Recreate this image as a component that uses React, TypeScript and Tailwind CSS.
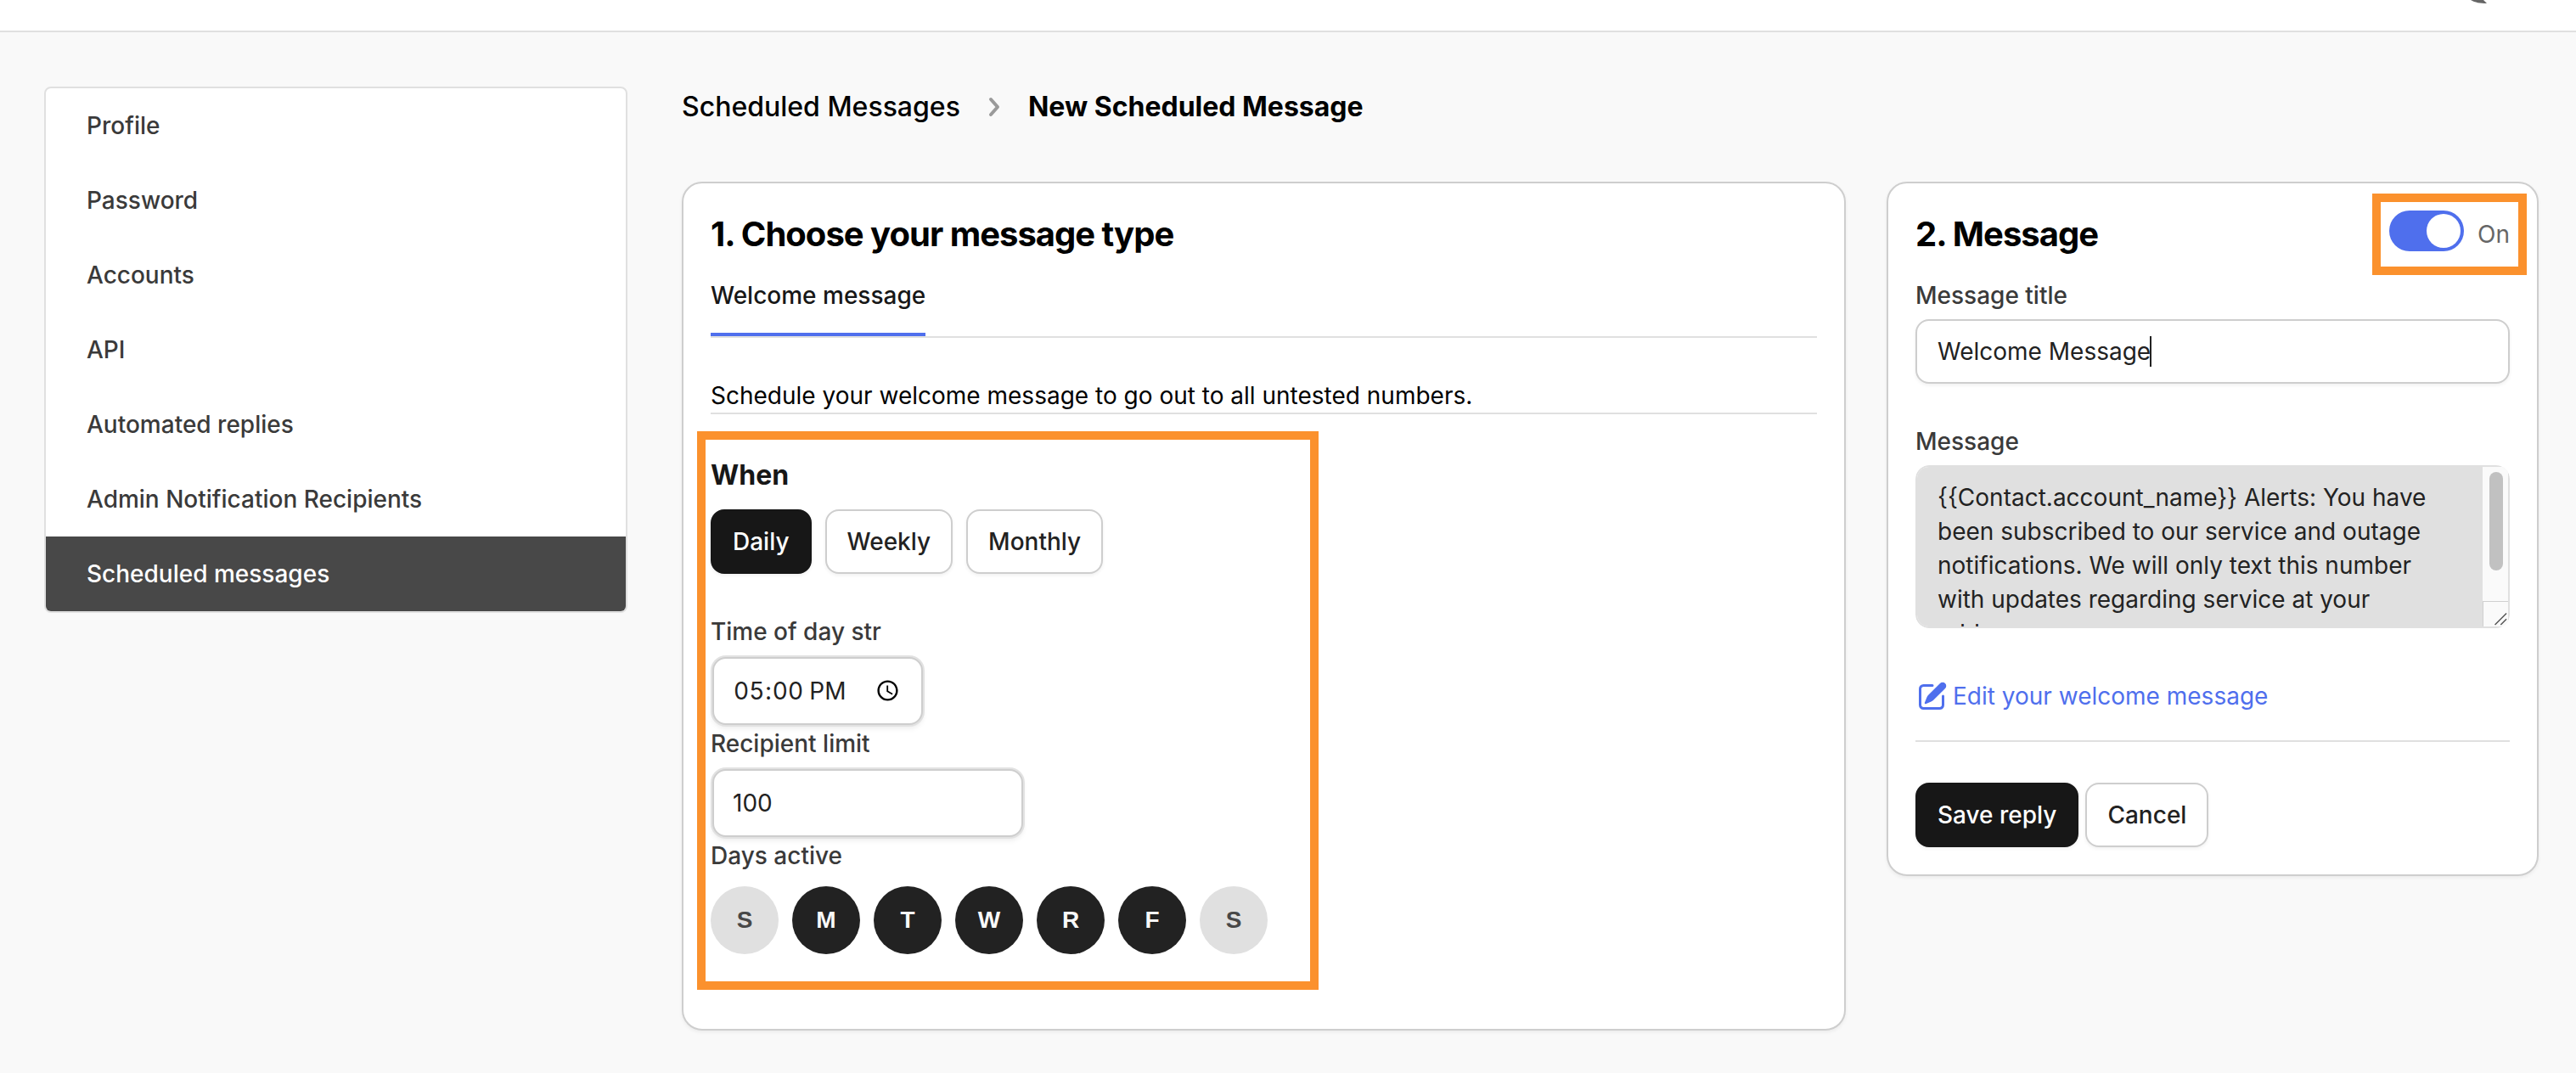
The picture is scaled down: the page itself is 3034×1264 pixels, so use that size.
import clsx from "clsx";
import { HiMiniPencilSquare } from "react-icons/hi2";

const navItems = [
  "Profile",
  "Password",
  "Accounts",
  "API",
  "Automated replies",
  "Admin Notification Recipients",
  "Scheduled messages",
];

const frequencies = ["Daily", "Weekly", "Monthly"];

const days = [
  { name: "Sunday", letter: "S", active: false },
  { name: "Monday", letter: "M", active: true },
  { name: "Tuesday", letter: "T", active: true },
  { name: "Wednesday", letter: "W", active: true },
  { name: "Thursday", letter: "R", active: true },
  { name: "Friday", letter: "F", active: true },
  { name: "Saturday", letter: "S", active: false },
];

const welcomeText =
  "{{Contact.account_name}} Alerts: You have been subscribed to our service and outage notifications. We will only text this number with updates regarding service at your address\n\nReply STOP to opt out at any time.";

const cardClass =
  "rounded-3xl border-2 border-[#cecece] bg-white p-8 shadow-[0_2px_4px_rgba(0,0,0,0.06)]";
const labelClass = "block text-[28px] leading-10 font-medium text-[#3a3a3a]";
const ringInputClass =
  "m-0.5 h-20 rounded-2xl border-2 border-[#cecece] bg-white px-[22px] text-[28px] text-[#222] shadow-[0_0_0_2px_#e2e2e2,0_4px_6px_rgba(0,0,0,0.08)] outline-none";

function Button({ children, primary = false }: { children: string; primary?: boolean }) {
  return (
    <button
      type="button"
      className={clsx(
        "h-[76px] rounded-2xl border-2 px-6 text-[28px] leading-10 font-medium shadow-[0_2px_4px_rgba(0,0,0,0.06)]",
        primary ? "border-[#171717] bg-[#171717] text-white" : "border-[#cecece] bg-white text-[#222]"
      )}
    >
      {children}
    </button>
  );
}

function Sidebar() {
  return (
    <nav className="w-[687px] shrink-0 self-start overflow-hidden rounded-lg border-2 border-[#e0e0e0] bg-white">
      {navItems.map((item) => (
        <a
          key={item}
          href="#"
          className={clsx(
            "block px-12 py-6 text-[28px] leading-10 font-medium",
            item === "Scheduled messages" ? "bg-[#484848] text-white" : "text-[#3a3a3a]"
          )}
        >
          {item}
        </a>
      ))}
    </nav>
  );
}

function Breadcrumb() {
  return (
    <div className="flex items-center gap-8 text-[32px] leading-12 text-black">
      <a href="#" className="font-medium">
        Scheduled Messages
      </a>
      <svg className="h-6 w-4" viewBox="0 0 16 24" fill="none" stroke="#9a9a9a" strokeWidth="4">
        <path d="M4 3l8 9-8 9" strokeLinecap="round" strokeLinejoin="round" />
      </svg>
      <span className="font-bold">New Scheduled Message</span>
    </div>
  );
}

function MessageType() {
  return (
    <section className={cardClass}>
      <h2 className="text-[40px] leading-14 font-bold tracking-tight text-black">1. Choose your message type</h2>

      <div className="mt-6 flex border-b-2 border-[#e0e0e0]">
        <a href="#" className="border-b-4 border-[#4f6fed] pb-6 text-[28px] leading-10 font-medium text-[#171717]">
          Welcome message
        </a>
      </div>

      <p className="mt-12 border-b-2 border-[#e0e0e0] text-[28px] leading-10 text-black">
        Schedule your welcome message to go out to all untested numbers.
      </p>

      <div className="relative mt-12 mb-14 flex w-fit flex-col items-start">
        <h3 className="text-[32px] leading-12 font-bold text-[#171717]">When</h3>
        <div className="mt-4 flex gap-4">
          {frequencies.map((f) => (
            <Button key={f} primary={f === "Daily"}>
              {f}
            </Button>
          ))}
        </div>

        <label htmlFor="time" className={clsx(labelClass, "mt-12 mb-2")}>
          Time of day str
        </label>
        <input
          id="time"
          type="time"
          defaultValue="17:00"
          className={clsx(ringInputClass, "w-[248px] tabular-nums")}
        />

        <label htmlFor="limit" className={clsx(labelClass, "mb-2")}>
          Recipient limit
        </label>
        <input
          id="limit"
          type="text"
          inputMode="numeric"
          defaultValue="100"
          className={clsx(ringInputClass, "w-[366px]")}
        />

        <p className={labelClass}>Days active</p>
        <div className="mt-4 flex gap-4">
          {days.map((day) => (
            <button
              key={day.name}
              type="button"
              aria-label={day.name}
              aria-pressed={day.active}
              className={clsx(
                "size-20 rounded-full font-['Liberation_Sans',Arial,sans-serif] text-[28px] font-bold",
                day.active ? "bg-[#222] text-[#f9f9f9]" : "bg-[#e0e0e0] text-[#484848]"
              )}
            >
              {day.letter}
            </button>
          ))}
        </div>

        {/* Highlight */}
        <div className="pointer-events-none absolute -top-7 -right-15 -bottom-[42px] -left-4 border-[10px] border-[#fb912d]" />
      </div>
    </section>
  );
}

function MessageForm() {
  return (
    <section className={clsx(cardClass, "self-start")}>
      <div className="flex justify-between">
        <h2 className="text-[40px] leading-14 font-bold tracking-tight text-black">2. Message</h2>
        <label className="relative flex items-start gap-4">
          <input type="checkbox" defaultChecked className="peer sr-only" />
          <span className="flex h-12 w-[88px] justify-end rounded-full bg-[#4f6fed] p-1">
            <span className="size-10 rounded-full bg-white" />
          </span>
          <span className="pt-2 text-[28px] leading-10 text-[#666]">On</span>
          {/* Highlight */}
          <span className="pointer-events-none absolute -inset-5 border-[10px] border-[#fb912d]" />
        </label>
      </div>

      <label htmlFor="title" className={clsx(labelClass, "mt-6 mb-2")}>
        Message title
      </label>
      <div className="relative">
        <input
          id="title"
          type="text"
          defaultValue="Welcome Message"
          className="block h-[76px] w-full rounded-2xl border-2 border-[#cecece] bg-white px-6 text-[28px] text-[#222] caret-transparent shadow-[0_2px_4px_rgba(0,0,0,0.06)] outline-none"
        />
        {/* Caret */}
        <span className="pointer-events-none absolute top-5 left-[276px] h-9 w-0.5 bg-[#222]" />
      </div>

      <label htmlFor="message" className={clsx(labelClass, "mt-12 mb-2")}>
        Message
      </label>
      <div className="relative overflow-hidden rounded-2xl">
        <textarea
          id="message"
          readOnly
          defaultValue={welcomeText}
          className="block h-48 w-full resize-none rounded-2xl border-2 border-[#e0e0e0] bg-[#e0e0e0] py-4 pr-14 pl-6 text-[28px] leading-10 text-[#222] outline-none [scrollbar-width:none]"
        />
        {/* Scroll track and resize grip */}
        <div className="pointer-events-none absolute top-0.5 right-0.5 bottom-0.5 flex w-[30px] flex-col justify-between bg-[#fafafa]">
          <div className="mt-1.5 ml-2 h-[116px] w-4 rounded-full bg-[#c1c1c1]" />
          <svg
            className="size-[30px] border-t border-l border-[#d0d0d0]"
            viewBox="0 0 30 30"
            stroke="#555"
            strokeWidth="1.5"
          >
            <path d="M14 28L28 14M21 28L28 21" />
          </svg>
        </div>
      </div>

      <a href="#" className="mt-[60px] flex items-center gap-1 text-[28px] leading-10 text-[#4f6fed]">
        <HiMiniPencilSquare className="size-10" />
        Edit your welcome message
      </a>

      <hr className="mt-8 border-t-2 border-[#e0e0e0]" />

      <div className="mt-12 flex gap-2">
        <Button primary>Save reply</Button>
        <Button>Cancel</Button>
      </div>
    </section>
  );
}

export default function App() {
  return (
    <div className="min-h-screen bg-[#f9f9f9] font-[Inter,sans-serif]">
      <header className="flex h-[38px] items-start justify-end border-b-2 border-[#e0e0e0] bg-white pr-[104px]">
        <svg className="h-1 w-5" viewBox="0 0 20 4" fill="#666">
          <path d="M0 0h15l4 4C11 4 5 3 0 0z" />
        </svg>
      </header>

      <div className="flex gap-16 pt-16 pr-11 pb-10 pl-[52px]">
        <Sidebar />
        <main className="flex-1">
          <Breadcrumb />
          <div className="mt-16 grid grid-cols-[1371fr_768fr] gap-12">
            <MessageType />
            <MessageForm />
          </div>
        </main>
      </div>
    </div>
  );
}
